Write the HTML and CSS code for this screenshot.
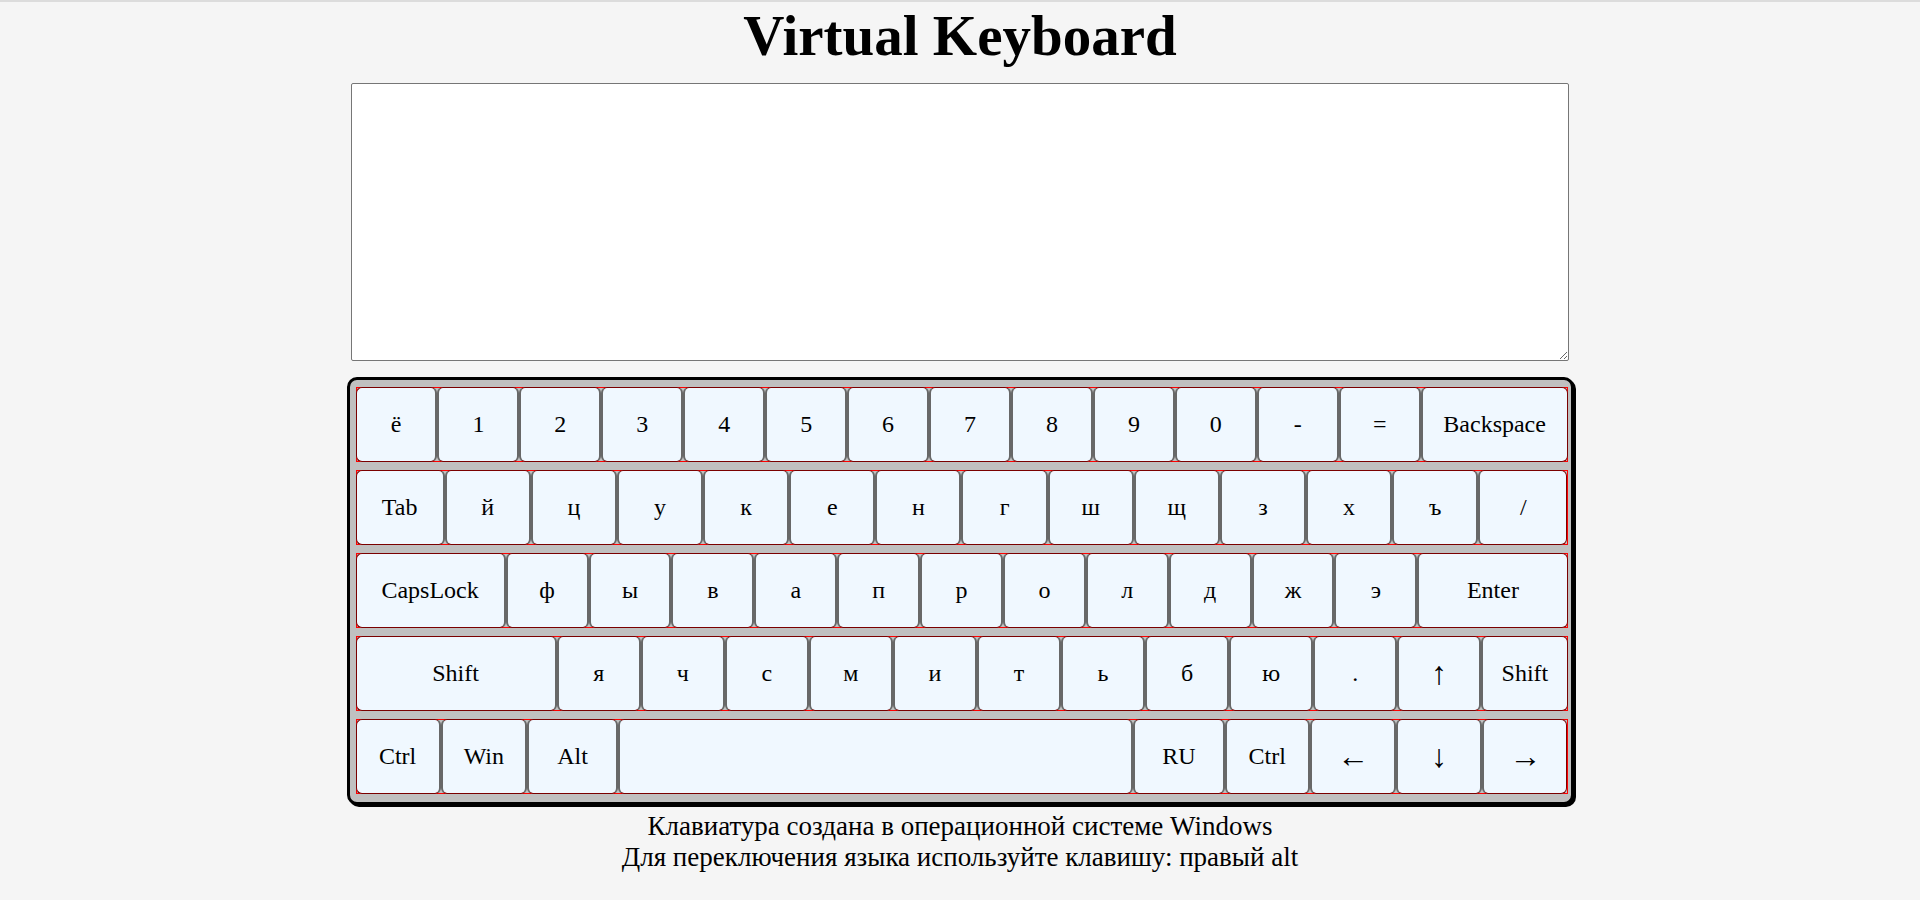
FILE: index.html
```html
<!DOCTYPE html>
<html lang="ru">
<head>
<meta charset="utf-8">
<title>Virtual Keyboard</title>
<link rel="stylesheet" href="styles.css">
</head>
<body>
<h1 class="title">Virtual Keyboard</h1>
<textarea class="text"></textarea>
<div class="keyboard">
  <div class="row r1">
    <div class="key">ё</div><div class="key">1</div><div class="key">2</div><div class="key">3</div><div class="key">4</div><div class="key">5</div><div class="key">6</div><div class="key">7</div><div class="key">8</div><div class="key">9</div><div class="key">0</div><div class="key">-</div><div class="key">=</div><div class="key backspace">Backspace</div>
  </div>
  <div class="row r2">
    <div class="key tab">Tab</div><div class="key">й</div><div class="key">ц</div><div class="key">у</div><div class="key">к</div><div class="key">е</div><div class="key">н</div><div class="key">г</div><div class="key">ш</div><div class="key">щ</div><div class="key">з</div><div class="key">х</div><div class="key">ъ</div><div class="key slash">/</div>
  </div>
  <div class="row r3">
    <div class="key caps">CapsLock</div><div class="key">ф</div><div class="key">ы</div><div class="key">в</div><div class="key">а</div><div class="key">п</div><div class="key">р</div><div class="key">о</div><div class="key">л</div><div class="key">д</div><div class="key">ж</div><div class="key">э</div><div class="key enter">Enter</div>
  </div>
  <div class="row r4">
    <div class="key lshift">Shift</div><div class="key">я</div><div class="key">ч</div><div class="key">с</div><div class="key">м</div><div class="key">и</div><div class="key">т</div><div class="key">ь</div><div class="key">б</div><div class="key">ю</div><div class="key">.</div><div class="key sym">↑</div><div class="key rshift">Shift</div>
  </div>
  <div class="row r5">
    <div class="key ctrl">Ctrl</div><div class="key win">Win</div><div class="key alt">Alt</div><div class="key space"></div><div class="key lang">RU</div><div class="key ctrl">Ctrl</div><div class="key arrow sym">←</div><div class="key arrow sym">↓</div><div class="key ctrl sym">→</div>
  </div>
</div>
<div class="info">
  <div>Клавиатура создана в операционной системе Windows</div>
  <div>Для переключения языка используйте клавишу: правый alt</div>
</div>
</body>
</html>
```
FILE: styles.css
```css
html {
  background: #f5f5f5;
  border-top: 2px solid #dcdcdc;
}

body {
  margin: 0;
  font-family: "Liberation Serif", "Times New Roman", serif;
  color: #000;
}

.title {
  margin: 3px 0 0;
  font-size: 57px;
  line-height: 62px;
  font-weight: bold;
  text-align: center;
}

.text {
  display: block;
  box-sizing: content-box;
  width: 1212px;
  height: 272px;
  margin: 16px auto 0;
  padding: 2px;
  border: 1px solid #767676;
  border-radius: 2px;
  background: #fff;
}

.keyboard {
  width: fit-content;
  margin: 16px auto 0;
  padding: 7px 3px 8px 6px;
  border: 3px solid #000;
  border-radius: 10px;
  background: #c0c0c0;
  box-shadow: 2px 2px 0 #000;
  display: flex;
  flex-direction: column;
  gap: 8px;
}

.row {
  display: flex;
  width: 1210px;
  height: 73px;
  border: 1px solid #ff0000;
  background: #c0c0c0;
}

.key {
  flex: 1 1 82px;
  min-width: 0;
  box-sizing: border-box;
  margin: -1px 0;
  border-style: solid;
  border-width: 1px 2px;
  border-color: #7a0000 #686868;
  border-radius: 6px;
  background: #f0f8ff;
  display: flex;
  align-items: center;
  justify-content: center;
  font-size: 24px;
}

.key:first-child {
  margin-left: -1px;
  border-left: 1px solid #7a0000;
}

.key:last-child {
  margin-right: -1px;
  border-right: 1px solid #7a0000;
}

.key.sym {
  font-size: 32px;
}

.r1 .key { flex-basis: 82px; }
.r1 .backspace { flex-basis: 147px; }

.r2 .key { flex-basis: 86px; }
.r2 .tab, .r2 .slash { flex-basis: 89px; }

.r3 .key { flex-basis: 82.7px; }
.r3 .caps, .r3 .enter { flex-basis: 150px; }

.r4 .key { flex-basis: 83.9px; }
.r4 .lshift { flex-basis: 201px; }
.r4 .rshift { flex-basis: 86px; }

.r5 .ctrl { flex-basis: 85px; }
.r5 .win, .r5 .arrow { flex-basis: 86px; }
.r5 .alt, .r5 .lang { flex-basis: 91px; }
.r5 .space { flex-basis: 515px; }

.info {
  margin-top: 6px;
  font-size: 27px;
  line-height: 31px;
  text-align: center;
}
```
